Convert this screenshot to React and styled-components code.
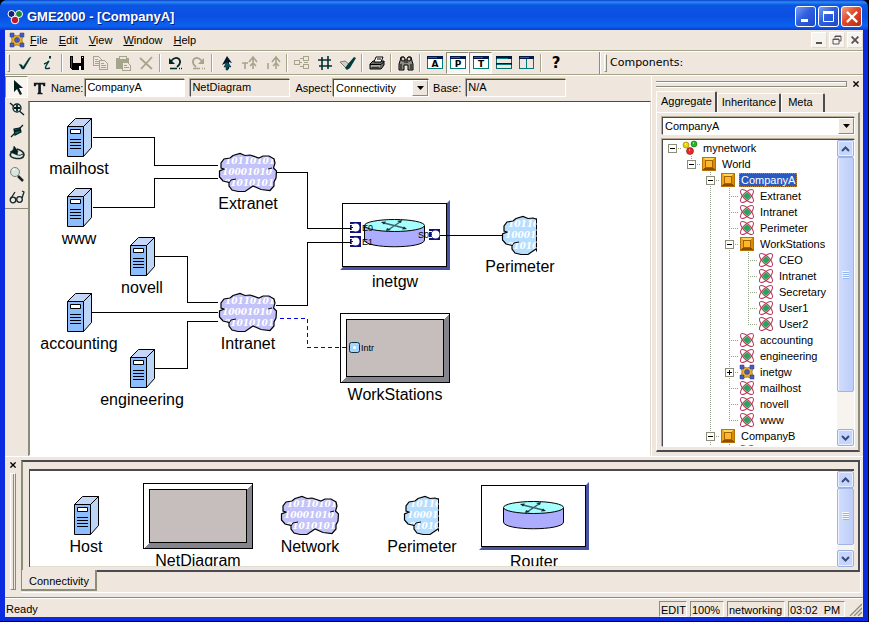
import React, { useId, useState } from "react";
import styled, { createGlobalStyle, css } from "styled-components";

const face = "#efe7de";
const shade = "#8c8c7b";
const dark = "#4a4a52";
const frameBlue = "#0a2be0";

const GlobalStyle = createGlobalStyle`
  *, *::before, *::after { box-sizing: border-box; }
  body { margin: 0; background: #000; }
  body, button, input, select {
    font-family: "Liberation Sans", Arial, sans-serif;
    font-size: 11px;
    line-height: 14px;
    color: #000;
  }
  button { border: 0; padding: 0; background: none; }
`;

const Shell = styled.div`
  display: flex;
  flex-direction: column;
  height: 100vh;
  border: solid #000;
  border-width: 0 1px 1px 0;
  background: ${frameBlue};
  border-radius: 7px 7px 0 0;
`;

const TitleBar = styled.header`
  display: flex;
  align-items: center;
  gap: 4px;
  height: 30px;
  padding: 3px 6px 0 7px;
  border-radius: 7px 7px 0 0;
  background: linear-gradient(#0a3ccc, #2a8cf0 2px, #0c56e4 5px, #0a4ee2 16px, #0c62f0 26px, #0a3cd4);
`;

const Title = styled.h1`
  flex: 1;
  margin: 0;
  color: #fff;
  font-size: 13px;
  line-height: 16px;
  font-weight: bold;
  text-shadow: 1px 1px 0 #082080;
`;

const CaptionButtons = styled.div`
  display: flex;
  gap: 2px;
`;

const CaptionButton = styled.button`
  display: grid;
  place-items: center;
  width: 21px;
  height: 21px;
  border: 1px solid #fff;
  border-radius: 3px;
  background: ${(p) =>
    p.$close
      ? "linear-gradient(135deg, #f0a088, #e0492a 45%, #b82a10)"
      : "linear-gradient(135deg, #7a9cf0, #2f5fe0 45%, #1a48c8)"};
`;

const Body = styled.div`
  flex: 1;
  min-height: 0;
  display: flex;
  flex-direction: column;
  margin: 0 5px 4px;
  background: ${face};
`;

const Etched = css`
  border-bottom: 1px solid #fff;
  box-shadow: inset 0 -1px 0 #a5a58c;
`;

const MenuBar = styled.nav`
  ${Etched}
  display: flex;
  align-items: center;
  height: 22px;
  padding: 0 0 2px 4px;
`;

const MenuButton = styled.button`
  padding: 0 6px 0 5px;
  height: 18px;
  &::first-letter { text-decoration: underline; }
`;

const MenuIcon = styled.span`
  display: flex;
  width: 16px;
`;

const MdiButtons = styled.div`
  display: flex;
  gap: 2px;
  margin-left: auto;
`;

const MdiButton = styled.button`
  display: grid;
  place-items: center;
  width: 16px;
  height: 16px;
  background: #f7f3ef;
  border: 1px solid;
  border-color: #fff #e0d8cc #e0d8cc #fff;
`;

const ToolBar = styled.div`
  ${Etched}
  display: flex;
  align-items: center;
  height: 24px;
  padding: 0 0 2px 2px;
`;

const Grip = styled.span`
  width: 3px;
  height: 18px;
  margin-right: 3px;
  border: 1px solid;
  border-color: #fff ${shade} ${shade} #fff;
`;

const ToolButton = styled.button`
  display: grid;
  place-items: center;
  width: 23px;
  height: 22px;
  flex: none;
  ${(p) =>
    p["aria-pressed"] &&
    css`
      background: #f9f5f1;
      border: 1px solid;
      border-color: ${shade} #fff #fff ${shade};
    `}
`;

const Separator = styled.span`
  flex: none;
  width: 2px;
  height: 18px;
  margin: 0 2px;
  border-left: 1px solid #a5a58c;
  border-right: 1px solid #fff;
`;

const BandEdge = styled.span`
  width: 2px;
  height: 22px;
  margin: 0 3px 0 32px;
  border-left: 1px solid ${shade};
  border-right: 1px solid #fff;
`;

const BandLabel = styled.span`
  font-family: "DejaVu Sans", sans-serif;
  white-space: nowrap;
`;

const Main = styled.div`
  flex: 1;
  min-height: 0;
  display: flex;
`;

const ToolPalette = styled.aside`
  display: flex;
  flex-direction: column;
  width: 23px;
  height: 133px;
  flex: none;
  border-bottom: 1px solid ${shade};
`;

const Center = styled.main`
  flex: 1;
  min-width: 0;
  display: flex;
  flex-direction: column;
`;

const PropertyBar = styled.div`
  display: flex;
  align-items: center;
  height: 25px;
  padding: 0 0 2px 5px;
`;

const FieldLabel = styled.label`
  margin: 0 1px 0 4px;
  white-space: nowrap;
`;

const sunken = css`
  border: 1px solid;
  border-color: ${dark} #fff #fff ${dark};
  box-shadow: -1px -1px 0 #b5ad94;
`;

const TextField = styled.input`
  ${sunken}
  width: 100px;
  height: 18px;
  padding: 0 1px 1px;
  margin: 0 1px;
  border-radius: 0;
  outline: none;
  background: ${(p) => (p.readOnly ? face : "#fff")};
`;

const PropertyGap = styled.span`
  width: 3px;
`;

const ComboFrame = styled.div`
  ${sunken}
  display: flex;
  width: ${(p) => (p.$wide ? "auto" : "96px")};
  height: 18px;
  background: #fff;
`;

const ComboSelect = styled.select`
  flex: 1;
  min-width: 0;
  appearance: none;
  border: 0;
  border-radius: 0;
  outline: none;
  padding: 0 2px;
  background: #fff;
`;

const ComboArrow = styled.span`
  display: grid;
  place-items: center;
  width: 16px;
  background: ${face};
  border: 1px solid;
  border-color: #fff ${shade} ${shade} #fff;
  pointer-events: none;
`;

const Canvas = styled.section`
  position: relative;
  flex: 1;
  min-height: 0;
  overflow: hidden;
  background: #fff;
  border: 1px solid;
  border-width: 1px 1px 1px 2px;
  border-color: ${dark} #e0dcd0 #fff ${shade};
`;

const Wires = styled.svg`
  position: absolute;
  left: 0;
  top: 0;
`;

const NodeBox = styled.figure`
  display: flex;
  flex-direction: column;
  align-items: center;
  width: 112px;
  margin: 0;
  flex: none;
  svg { display: block; overflow: visible; }
`;

const PlacedNode = styled(NodeBox)`
  position: absolute;
  left: ${(p) => p.$x - 56}px;
  top: ${(p) => p.$y}px;
`;

const Caption = styled.figcaption`
  margin-top: 3px;
  font-size: 16px;
  line-height: 18px;
  white-space: nowrap;
`;

const Browser = styled.aside`
  display: flex;
  flex-direction: column;
  flex: none;
  width: 212px;
  padding: 2px 3px 4px 4px;
  border-left: 1px solid #fff;
`;

const GripRow = styled.div`
  display: flex;
  align-items: center;
  height: 12px;
  gap: 4px;
`;

const GripLines = styled.span`
  flex: 1;
  height: 6px;
  border: solid ${shade};
  border-width: 1px 1px 1px 0;
  box-shadow: inset 0 1px 0 #fff, 0 1px 0 #fff;
`;

const CloseButton = styled.button`
  display: grid;
  place-items: center;
  width: 9px;
  height: 9px;
`;

const Tabs = styled.div`
  display: flex;
  align-items: flex-end;
  height: 22px;
`;

const Tab = styled.button`
  height: ${(p) => (p["aria-selected"] ? 21 : 19)}px;
  padding: 0 ${(p) => (p.$roomy ? 10 : 3)}px 3px ${(p) => (p.$roomy ? 6 : 4)}px;
  border: solid;
  border-width: 1px 2px 0 1px;
  border-color: #fff ${dark} #fff #fff;
  border-radius: 2px 2px 0 0;
`;

const TabPage = styled.div`
  flex: 1;
  min-height: 0;
  display: flex;
  flex-direction: column;
  gap: 4px;
  padding: 4px 3px 3px 5px;
  border: solid;
  border-width: 1px 2px 2px 1px;
  border-color: #fff ${shade} ${dark} #fff;
`;

const TreeFrame = styled.div`
  ${sunken}
  flex: 1;
  min-height: 0;
  display: flex;
  background: #fff;
`;

const Tree = styled.ul`
  flex: 1;
  margin: 0;
  padding: 0;
  list-style: none;
  overflow: hidden;
`;

const TreeRow = styled.li`
  display: flex;
  align-items: center;
  height: 16px;
`;

const dotsDown = "repeating-linear-gradient(#94a58c 0 1px, transparent 1px 2px)";
const dotsAcross = "repeating-linear-gradient(90deg, #94a58c 0 1px, transparent 1px 2px)";

const guideBackground = {
  none: "none",
  root: `${dotsAcross} 9px 8px / 10px 1px no-repeat`,
  pass: `${dotsDown} 9px 0 / 1px 16px no-repeat`,
  tee: `${dotsDown} 9px 0 / 1px 16px no-repeat, ${dotsAcross} 9px 8px / 10px 1px no-repeat`,
  end: `${dotsDown} 9px 0 / 1px 8px no-repeat, ${dotsAcross} 9px 8px / 10px 1px no-repeat`,
};

const Guide = styled.span`
  display: grid;
  place-items: center;
  width: 19px;
  height: 16px;
  flex: none;
  background: ${(p) => guideBackground[p.$kind]};
`;

const Expander = styled.button`
  display: grid;
  place-items: center;
  width: 9px;
  height: 9px;
  background: #fff;
  border: 1px solid ${shade};
`;

const TreeIcon = styled.span`
  display: flex;
  width: 16px;
  margin-right: 3px;
  flex: none;
`;

const TreeLabel = styled.span`
  padding: 0 2px;
  line-height: 14px;
  white-space: nowrap;
  ${(p) =>
    p.$selected &&
    css`
      color: #fff;
      background: #2a5ac0;
      outline: 1px dotted #c08030;
      outline-offset: -1px;
    `}
`;

const ScrollTrack = styled.div`
  display: flex;
  flex-direction: column;
  flex: none;
  width: 17px;
  background: #f7f3ef;
`;

const ScrollButton = styled.button`
  display: grid;
  place-items: center;
  height: 17px;
  border: 1px solid #9cb0e0;
  border-radius: 2px;
  background: #c6d5fb;
  box-shadow: inset 0 0 0 1px #e8effe;
`;

const ScrollThumb = styled.div`
  flex: ${(p) => p.$part} 0 0;
  display: grid;
  place-items: center;
  border: 1px solid #a0b4e8;
  border-radius: 2px;
  background: linear-gradient(90deg, #d0defc, #bccdf8);
  box-shadow: inset 1px 0 0 #eef3ff;
`;

const ScrollRest = styled.div`
  flex: ${(p) => p.$part} 0 0;
`;

const PartDock = styled.section`
  display: flex;
  padding: 3px 2px 4px 4px;
  border-top: 1px solid #fff;
  height: 141px;
  flex: none;
`;

const DockHandle = styled.div`
  display: flex;
  flex-direction: column;
  align-items: center;
  gap: 4px;
  width: 12px;
  padding-right: 5px;
  flex: none;
`;

const DockLines = styled.span`
  flex: 1;
  width: 6px;
  margin-bottom: 3px;
  border: 1px solid;
  border-color: #fff ${shade} ${shade} #fff;
  box-shadow: inset 2px 0 0 ${face}, inset 3px 0 0 ${shade};
`;

const DockPanel = styled.div`
  flex: 1;
  min-width: 0;
  display: flex;
  flex-direction: column;
  border-right: 1px solid #fff;
  border-bottom: 1px solid #fff;
`;

const DockPage = styled.div`
  padding: 7px 4px 3px 6px;
  border: solid;
  border-width: 2px;
  border-color: ${dark} ${dark} ${dark} ${shade};
`;

const PartFrame = styled.div`
  display: flex;
  height: 98px;
  border-top: 2px solid ${dark};
  border-left: 1px solid ${dark};
`;

const PartList = styled.div`
  flex: 1;
  min-width: 0;
  overflow: hidden;
  background: #fff;
  border-bottom: 1px solid #e0dcd0;
`;

const PartRow = styled.div`
  display: flex;
  align-items: center;
  height: 110px;
`;

const BottomTab = styled.button`
  align-self: flex-start;
  height: 21px;
  margin-top: -2px;
  padding: 2px 6px 0 7px;
  background: ${face};
  border: solid;
  border-width: 0 2px 2px 1px;
  border-color: ${shade};
`;

const StatusBar = styled.footer`
  display: flex;
  align-items: center;
  gap: 3px;
  height: 20px;
  flex: none;
  padding: 2px 1px 0;
  border-top: 1px solid ${shade};
  box-shadow: inset 0 1px 0 #fff;
`;

const StatusText = styled.span`
  flex: 1;
`;

const StatusCell = styled.span`
  height: 16px;
  padding: 1px 0 0 1px;
  min-width: ${(p) => p.$min || 0}px;
  border: 1px solid;
  border-color: ${shade} #fff #fff ${shade};
  white-space: pre;
`;

/* ---------- small icons ---------- */

const glyphs = {
  check: <path d="M2 9l3 1 1 2L12 3l2-1L7 14H5z" fill="#002020" stroke="#106060" strokeWidth=".5" />,
  info: (
    <g fill="none" stroke="#003838" strokeWidth="1.4">
      <path d="M4 9q3-1 5-3L6 11q-2 4 4 2" />
      <path d="M10 1v2.500" strokeWidth="2" />
    </g>
  ),
  save: (
    <g shapeRendering="crispEdges">
      <path d="M1 1h14v14H3l-2-2z" fill="#000" />
      <path d="M4 1h8v7H4z" fill="#efe7de" />
      <path d="M5 10h7v5H5z" fill="#000" />
      <path d="M10 11h2v4h-2zM13 2h1v1h-1z" fill="#fff" />
      <path d="M2 2h1v11H2z" fill="#006868" />
    </g>
  ),
  copy: (
    <g fill="#efe7de" stroke="#a5a58c" shapeRendering="crispEdges">
      <path d="M1.500 1.500h5l3 3v6h-8zM3 4.500h3M3 6.500h5M3 8.500h5" />
      <path d="M7.500 5.500h5l3 3v6h-8zM9 8.500h3M9 10.500h5M9 12.500h5" />
    </g>
  ),
  paste: (
    <g shapeRendering="crispEdges">
      <path d="M1 3h13v11H1z" fill="#a5a58c" />
      <path d="M4 1h7v3H4z" fill="#efe7de" stroke="#a5a58c" />
      <path d="M7.500 7.500h5l3 3v5h-8zM9 10.500h3M9 12.500h5" fill="#efe7de" stroke="#a5a58c" />
    </g>
  ),
  cut: <path d="M2 3l12 11M14 2L3 14" stroke="#a5a58c" strokeWidth="1.8" />,
  undo: (
    <g fill="none" stroke="#002828" strokeWidth="1.800">
      <path d="M4 6q4-5 8-2 3 4-2 8" />
      <path d="M2 3v6h6z" fill="#002828" stroke="none" />
      <path d="M3 13.500h7M12 13.500h1M14 13.500h1" strokeWidth="1.400" />
    </g>
  ),
  redo: (
    <g fill="none" stroke="#a5a58c" strokeWidth="1.800">
      <path d="M12 6q-4-5-8-2-3 4 2 8" />
      <path d="M14 3v6H8z" fill="#a5a58c" stroke="none" />
      <path d="M3 13.500h7M12 13.500h1M14 13.500h1" strokeWidth="1.400" />
    </g>
  ),
  up: (
    <g>
      <path d="M8 1l5 7-3-1v7H8V8L5 9l-2 1z" fill="#001828" />
      <path d="M8 6l4 6H9v3H7v-3H5z" fill="#005868" stroke="#001018" strokeWidth=".5" />
    </g>
  ),
  upType: (
    <g fill="none" stroke="#a5a58c" strokeWidth="1.600">
      <path d="M0 8h6M3 8v6M11 14V3M7 7l4-5 4 5M8 11l3-3 3 3" />
    </g>
  ),
  upInst: (
    <g fill="none" stroke="#a5a58c" strokeWidth="1.600">
      <path d="M3 8v6M11 14V3M7 7l4-5 4 5M8 11l3-3 3 3" />
    </g>
  ),
  hierarchy: (
    <g fill="#efe7de" stroke="#a5a58c" shapeRendering="crispEdges">
      <path d="M.5 5.500h5v4h-5zM9.500 1.500h5v4h-5zM9.500 9.500h5v4h-5zM6 3.500h3M6 7.500h2M6 11.500h3M10 7.500h4" />
    </g>
  ),
  hash: <path d="M5 2v13M11 1v13M1 5h13M2 11h13" stroke="#003030" strokeWidth="1.600" />,
  brush: (
    <g>
      <path d="M0 7l5-1 4 3-2 5z" fill="#d6cec4" stroke="#5a6b63" strokeWidth=".8" />
      <path d="M5 13l3-4 6-7 2 1-6 10-3 2z" fill="#003c3c" />
    </g>
  ),
  print: (
    <g stroke="#000" strokeWidth="1">
      <path d="M1 9l3-3h11v4l-3 4H1z" fill="#6b6b63" />
      <path d="M5 7l2-5h7l-2 5z" fill="#fff" />
      <path d="M1 9.500h11l3-3M3 12h7M8 4h4" fill="none" />
      <path d="M2 11h9" stroke="#e8e4dc" />
    </g>
  ),
  find: (
    <g fill="#8c8c84" stroke="#000">
      <path d="M2 6l1-4h3l1 3h2l1-3h3l1 4 1 3v6h-5v-5H6v5H1V9z" />
      <circle cx="5" cy="4" r="2" fill="#d8d0c8" />
      <circle cx="11" cy="4" r="2" fill="#d8d0c8" />
      <path d="M3 9v5M13 9v5M6 7h4" />
    </g>
  ),
  splitRows: (
    <g shapeRendering="crispEdges">
      <path d="M.5 2.500h15v11H.5z" fill={face} stroke="#006b6b" />
      <path d="M0 1h16v3H0zM0 8h16v2H0z" fill="#00183c" />
      <path d="M1 3h11v1H1zM1 9h14v1H1z" fill="#087878" />
    </g>
  ),
  splitCols: (
    <g shapeRendering="crispEdges">
      <path d="M.5 2.500h14v11H.5zM7.500 4v10" fill={face} stroke="#007878" />
      <path d="M0 1h15v3H0z" fill="#00184c" />
      <path d="M1 2h9v1H1z" fill="#087878" />
    </g>
  ),
  pointer: <path d="M5 1v12l3-3 3 6 2-1-3-6h4z" fill="#001c1c" />,
  addLink: (
    <g stroke="#002020" strokeWidth="1.300">
      <path d="M1 2l14 12" />
      <circle cx="8" cy="7" r="4" fill="#e4e8e0" />
      <path d="M8 4v6M5 7h6" strokeWidth="1.800" />
    </g>
  ),
  removeLink: (
    <g stroke="#002020" strokeWidth="1.200">
      <path d="M2 14L14 2" />
      <path d="M5 6l6-1 1 4-6 3z" fill="#186868" />
      <path d="M5 8l7-1" strokeWidth="2" />
    </g>
  ),
  anchor: (
    <g fill="none" stroke="#103030" strokeWidth="1.600">
      <path d="M4 6q-6 5 1 7 9 2 10-3 0-4-7-6" />
      <path d="M6 8q3 4 8 1" strokeWidth="1" />
      <path d="M5 1l4 5-1 4-7-3 3-2z" fill="#002020" strokeWidth=".5" />
    </g>
  ),
  magnify: (
    <g>
      <path d="M9 9l5 5" stroke="#202020" strokeWidth="2.500" />
      <circle cx="6" cy="5" r="4.500" fill="#d8e4dc" stroke="#73847b" />
      <path d="M4 3l2-1" stroke="#fff" strokeWidth="1.500" />
    </g>
  ),
  glasses: (
    <g fill="none" stroke="#102828" strokeWidth="1.300">
      <circle cx="4" cy="11" r="2.800" />
      <circle cx="10.500" cy="10.500" r="2.800" />
      <path d="M1.500 10L6 3M13 9l2-6-2-1" />
    </g>
  ),
  typeT: <path d="M1 2h13v4h-2l-1-2H9v9l2 1v1H5v-1l1-1V4H4L3 6H1z" fill="#101820" />,
  folder: (
    <g shapeRendering="crispEdges">
      <path d="M1 1h14v14H1z" fill="#d88c08" />
      <path d="M1 1l3 3h7l4-3z" fill="#ffd65a" />
      <path d="M1 1l3 3v7l-3 4z" fill="#efa520" />
      <path d="M1 15l3-4h7l4 4z" fill="#8c4a00" />
      <path d="M4 4h7v7H4z" fill="#ffb829" stroke="#a56300" />
      <path d="M1.500 1.500h13v13h-13z" fill="none" stroke="#b57308" />
    </g>
  ),
  atom: (
    <g fill="none" stroke="#b5395a" strokeWidth="1">
      <ellipse cx="8" cy="8" rx="8.500" ry="3.600" transform="rotate(45 8 8)" />
      <ellipse cx="8" cy="8" rx="8.500" ry="3.600" transform="rotate(-45 8 8)" />
      <path d="M8 4.500l3.500 3.500L8 11.500 4.500 8z" fill="#29a55a" stroke="#2a8a50" />
    </g>
  ),
  model: (
    <g>
      <path d="M2 2l6 2 6-2-1 6 1 6-6-1-6 1 1-6z" fill="#f0b020" stroke="#8c6300" strokeWidth=".7" />
      <g fill="#4a5ac0" stroke="#303c88" strokeWidth=".5">
        <path d="M1 1h4v4H1zM11 1h4v4h-4zM1 11h4v4H1zM11 11h4v4h-4z" />
        <circle cx="8" cy="8" r="2.500" />
      </g>
    </g>
  ),
  project: (
    <g strokeWidth=".6">
      <circle cx="4" cy="5" r="3" fill="#e7d610" stroke="#847b00" />
      <circle cx="12" cy="4" r="3" fill="#29b529" stroke="#106b10" />
      <circle cx="8" cy="11" r="3.500" fill="#e72929" stroke="#8c1010" />
      <path d="M3 4h1M11 3h1M7 10h1" stroke="#fff" strokeWidth="1.200" />
    </g>
  ),
  logo: (
    <g stroke="#fff" strokeWidth="1">
      <circle cx="4.500" cy="5" r="3.500" fill="#182078" />
      <circle cx="12" cy="5" r="3.500" fill="#188838" />
      <circle cx="8" cy="11" r="3.800" fill="#c01828" />
    </g>
  ),
};

const Icon = ({ name, size = 16 }) => (
  <svg width={size} height={size} viewBox="0 0 16 16" aria-hidden="true">
    {glyphs[name]}
  </svg>
);

const WindowIcon = ({ letter }) => (
  <svg width="16" height="16" viewBox="0 0 16 16" aria-hidden="true">
    <path d="M.5 2.500h15v11H.5z" fill="#fff" stroke="#007878" shapeRendering="crispEdges" />
    <path d="M0 1h16v3H0z" fill="#00184c" shapeRendering="crispEdges" />
    <path d="M1 2h9v1H1z" fill="#087878" shapeRendering="crispEdges" />
    <text x="8" y="12" textAnchor="middle" fontSize="9" fontWeight="bold" fontFamily="DejaVu Sans, sans-serif">
      {letter}
    </text>
  </svg>
);

const QuestionIcon = () => (
  <svg width="16" height="20" viewBox="0 0 16 20" aria-hidden="true">
    <text x="8" y="15" textAnchor="middle" fontSize="15" fontWeight="bold" fontFamily="DejaVu Sans, sans-serif">
      ?
    </text>
  </svg>
);

const Cross = ({ size = 7, color = "#000", weight = 1.6 }) => (
  <svg width={size} height={size} viewBox="0 0 7 7" aria-hidden="true">
    <path d="M.5.5l6 6M6.500.5l-6 6" stroke={color} strokeWidth={weight} />
  </svg>
);

const Triangle = () => (
  <svg width="7" height="4" viewBox="0 0 7 4" aria-hidden="true">
    <path d="M0 0h7L3.500 4z" />
  </svg>
);

const Chevron = ({ down }) => (
  <svg width="9" height="6" viewBox="0 0 9 6" aria-hidden="true">
    <path d={down ? "M1 1l3.500 3.500L8 1" : "M1 5l3.500-3.500L8 5"} fill="none" stroke="#39497b" strokeWidth="2" />
  </svg>
);

const ThumbRidges = () => (
  <svg width="7" height="8" viewBox="0 0 7 8" aria-hidden="true" shapeRendering="crispEdges">
    <path d="M0 .5h7M0 2.500h7M0 4.500h7M0 6.500h7" stroke="#f4f9ff" />
    <path d="M1 1.500h6M1 3.500h6M1 5.500h6M1 7.500h6" stroke="#94b5f0" />
  </svg>
);

/* ---------- diagram drawings ---------- */

const HostArt = () => (
  <svg width="25" height="39" viewBox="0 0 25 39" aria-hidden="true">
    <g stroke="#000" strokeLinejoin="round">
      <path d="M.5 8.500l8-8h16l-8 8z" fill="#c6d6f8" />
      <path d="M16.500 8.500l8-8v29l-8 9z" fill="#bdd6f8" />
      <path d="M.5 8.500h16v30H.5z" fill="#8cbdff" />
      <path d="M3.500 11.500h10v4h-10z" fill="#fff" />
      <path d="M3 21.500h11M3 24.500h11M3 27.500h11M3 30.500h11" />
    </g>
  </svg>
);

const cloudPath =
  "M2 15V10L5 6 11 5 14 2.500 21 .5 26 2.500 31 2 40 5 44 3 50 3 55 6 56 10 54.500 15 57.500 18 57 25 55 29 55 33 51 37.500 42 36.500 34 33 26 38.500H19L13 37 10 33V29.500L4 28 .5 24V18L5 16z";

const CloudArt = ({ cropped }) => {
  const id = useId();
  return (
    <svg width={cropped ? 36 : 58} height="39" viewBox={cropped ? "0 0 36 39" : "0 0 58 39"} aria-hidden="true">
      <clipPath id={id + "a"}>
        <path d={cloudPath} />
      </clipPath>
      <clipPath id={id + "b"}>
        <rect x="-1" y="-1" width={cropped ? 36 : 60} height="41" />
      </clipPath>
      <g clipPath={`url(#${id}b)`}>
        <path d={cloudPath} fill={cropped ? "#b5deff" : "#c3c3fa"} />
        <g
          clipPath={`url(#${id}a)`}
          fill="#fff"
          fontFamily="DejaVu Serif, serif"
          fontStyle="italic"
          fontWeight="bold"
          fontSize="9"
        >
          <text x="6" y="11">{cropped ? "10110" : "10110101"}</text>
          <text x="3" y="22">{cropped ? "10001" : "10001010"}</text>
          <text x="5" y="33">{cropped ? "01010" : "01010101"}</text>
        </g>
        <path d={cloudPath} fill="none" stroke="#000" strokeWidth="1.200" />
        <path d="M10 30l2-3 5-1M49 16l4-1" fill="none" stroke="#000" />
      </g>
      {cropped && <path d="M34.500 2.500v33" stroke="#000" strokeDasharray="5 1" />}
    </svg>
  );
};

const Cylinder = ({ x, y }) => (
  <g transform={`translate(${x} ${y})`}>
    <path d="M.5 7v14c0 9 60 9 60 0V7" fill="#adadff" stroke="#000" />
    <ellipse cx="30.500" cy="6.500" rx="30" ry="6" fill="#a5ffff" stroke="#000" />
    <path d="M20 4l20 5M24 11L36 3" stroke="#39636b" strokeWidth="1.500" />
    <path d="M17 3l5-.5-2 3zM43 10l-5 .5 2-3zM38 1l-5 1 4 2zM22 12l5-1-4-2z" fill="#182828" />
  </g>
);

const Port = ({ x, y, flip }) => (
  <g transform={`translate(${x} ${y})`}>
    <path d="M0 0h11v11H0z" fill="#10107b" shapeRendering="crispEdges" />
    <circle cx={flip ? 6.500 : 5.500} cy="5.500" r="4" fill="#fff" />
    <path d="M0 2.500h3M0 5.500h3M0 8.500h3" stroke="#fff" />
    <path d="M0 5.500h3" stroke="#10107b" />
  </g>
);

const RouterArt = ({ ports, height = 70 }) => (
  <svg width="110" height={height} viewBox={`0 0 110 ${height}`} aria-hidden="true">
    <path d={`M107 3l3-3v${height}H0l3-3z`} fill="#4a52a5" />
    <path
      d={`M2.500 3.500h104v${height - 7}h-104z`}
      fill="#fff"
      stroke="#000"
      shapeRendering="crispEdges"
    />
    <Cylinder x={24} y={19} />
    {ports && (
      <g fontFamily="Liberation Sans, Arial, sans-serif" fontSize="9">
        <Port x={10} y={22} />
        <Port x={10} y={36} />
        <Port x={89} y={29} flip />
        <text x="22" y="31">E0</text>
        <text x="22" y="45">E1</text>
        <text x="78" y="38">S0</text>
      </g>
    )}
  </svg>
);

const FrameArt = ({ port, height = 70 }) => (
  <svg width="110" height={height} viewBox={`0 0 110 ${height}`} aria-hidden="true">
    <g shapeRendering="crispEdges">
      <path d={`M.5.5h109v${height - 1}H.5z`} fill="#fff" stroke="#000" />
      <path d={`M103 7l6-6v${height - 2}H1l6-6z`} fill="#84848c" />
      <path d={`M6.500 6.500h97v${height - 13}h-97z`} fill="#c6bdbd" stroke="#000" />
    </g>
    {port && (
      <g fontFamily="Liberation Sans, Arial, sans-serif" fontSize="9">
        <rect x="9.500" y="29.500" width="10" height="10" rx="2" fill="#a5d6ff" stroke="#10313f" />
        <circle cx="14.500" cy="34.500" r="1.500" fill="#fff" />
        <text x="21" y="38">Intr</text>
      </g>
    )}
  </svg>
);

const wires = [
  "M62.500 35.500H124.500V63.500H188",
  "M62.500 105.500H124.500V76.500H188",
  "M125 154.500H157.500V200.500H188",
  "M62 210.500H188",
  "M125 266.500H157.500V219.500H188",
  "M246 70.500H277.500V126.500H320",
  "M246 203.500H277.500V140.500H320",
  "M410 133.500H473",
];

const diagramNodes = [
  { label: "mailhost", x: 49, y: 16, art: <HostArt /> },
  { label: "www", x: 49, y: 86, art: <HostArt /> },
  { label: "novell", x: 112, y: 135, art: <HostArt /> },
  { label: "accounting", x: 49, y: 191, art: <HostArt /> },
  { label: "engineering", x: 112, y: 247, art: <HostArt /> },
  { label: "Extranet", x: 218, y: 51, art: <CloudArt /> },
  { label: "Intranet", x: 218, y: 191, art: <CloudArt /> },
  { label: "inetgw", x: 365, y: 98, art: <RouterArt ports /> },
  { label: "Perimeter", x: 490, y: 114, art: <CloudArt cropped /> },
  { label: "WorkStations", x: 365, y: 211, art: <FrameArt port /> },
];

const parts = [
  { label: "Host", art: <HostArt /> },
  { label: "NetDiagram", art: <FrameArt height={66} /> },
  { label: "Network", art: <CloudArt /> },
  { label: "Perimeter", art: <CloudArt cropped /> },
  { label: "Router", art: <RouterArt height={68} /> },
];

const leaf = (label, guides) => ({ label, guides, icon: "atom" });
const top = ["none", "none", "pass"];
const treeRows = [
  { label: "mynetwork", guides: ["root"], icon: "project", open: true },
  { label: "World", guides: ["none", "end"], icon: "folder", open: true },
  { label: "CompanyA", guides: ["none", "none", "tee"], icon: "folder", open: true, selected: true },
  leaf("Extranet", [...top, "tee"]),
  leaf("Intranet", [...top, "tee"]),
  leaf("Perimeter", [...top, "tee"]),
  { label: "WorkStations", guides: [...top, "tee"], icon: "folder", open: true },
  leaf("CEO", [...top, "pass", "tee"]),
  leaf("Intranet", [...top, "pass", "tee"]),
  leaf("Secretary", [...top, "pass", "tee"]),
  leaf("User1", [...top, "pass", "tee"]),
  leaf("User2", [...top, "pass", "end"]),
  leaf("accounting", [...top, "tee"]),
  leaf("engineering", [...top, "tee"]),
  { label: "inetgw", guides: [...top, "tee"], icon: "model", open: false },
  leaf("mailhost", [...top, "tee"]),
  leaf("novell", [...top, "tee"]),
  leaf("www", [...top, "end"]),
  { label: "CompanyB", guides: ["none", "none", "tee"], icon: "folder", open: true },
  leaf("", [...top, "tee"]),
];

const toolGroups = [
  [["check", "Apply"], ["info", "Info"]],
  [["save", "Save"], ["copy", "Copy"], ["paste", "Paste"], ["cut", "Delete"]],
  [["undo", "Undo"], ["redo", "Redo"]],
  [["up", "Go to parent"], ["upType", "Go to type"], ["upInst", "Go to instance"]],
  [["hierarchy", "Hierarchy"], ["hash", "Grid"], ["brush", "Refresh"]],
  [["print", "Print"]],
  [["find", "Find"]],
];

const modeTools = [
  ["pointer", "Edit mode"],
  ["addLink", "Add connection"],
  ["removeLink", "Remove connection"],
  ["anchor", "Set mode"],
  ["magnify", "Zoom"],
  ["glasses", "Visualize"],
];

const ExpanderMark = ({ open }) => (
  <svg width="5" height="5" viewBox="0 0 5 5" aria-hidden="true" shapeRendering="crispEdges">
    <path d={open ? "M0 2.500h5" : "M0 2.500h5M2.500 0v5"} stroke="#000" />
  </svg>
);

const ScrollBar = ({ thumb, rest }) => (
  <ScrollTrack>
    <ScrollButton aria-label="Scroll up"><Chevron /></ScrollButton>
    <ScrollThumb $part={thumb}><ThumbRidges /></ScrollThumb>
    <ScrollRest $part={rest} />
    <ScrollButton aria-label="Scroll down"><Chevron down /></ScrollButton>
  </ScrollTrack>
);

const Combo = ({ wide, ...props }) => (
  <ComboFrame $wide={wide}>
    <ComboSelect {...props} />
    <ComboArrow><Triangle /></ComboArrow>
  </ComboFrame>
);

export default function App() {
  const [name, setName] = useState("CompanyA");
  const [mode, setMode] = useState("pointer");
  const [tab, setTab] = useState("Aggregate");

  return (
    <>
      <GlobalStyle />
      <Shell>
        <TitleBar>
          <Icon name="logo" />
          <Title>GME2000 - [CompanyA]</Title>
          <CaptionButtons>
            <CaptionButton aria-label="Minimize">
              <svg width="13" height="13" viewBox="0 0 13 13"><path d="M2 9h7v3H2z" fill="#fff" /></svg>
            </CaptionButton>
            <CaptionButton aria-label="Maximize">
              <svg width="13" height="13" viewBox="0 0 13 13">
                <path d="M1.500 2.500h10v9h-10z" fill="none" stroke="#fff" />
                <path d="M1 1h11v3H1z" fill="#fff" />
              </svg>
            </CaptionButton>
            <CaptionButton $close aria-label="Close"><Cross size={12} color="#fff" weight={1.3} /></CaptionButton>
          </CaptionButtons>
        </TitleBar>

        <Body>
          <MenuBar>
            <MenuIcon><Icon name="model" /></MenuIcon>
            {["File", "Edit", "View", "Window", "Help"].map((m) => (
              <MenuButton key={m}>{m}</MenuButton>
            ))}
            <MdiButtons>
              <MdiButton aria-label="Minimize document">
                <svg width="10" height="10" viewBox="0 0 10 10"><path d="M2 7h6v2H2z" fill="#5a5252" /></svg>
              </MdiButton>
              <MdiButton aria-label="Restore document">
                <svg width="10" height="10" viewBox="0 0 10 10">
                  <path d="M3 3V1h6v5H7M3 1.500h6M1 4h6v5H1zM1 4.500h6" fill="none" stroke="#5a5252" />
                </svg>
              </MdiButton>
              <MdiButton aria-label="Close document"><Cross size={8} color="#5a5252" /></MdiButton>
            </MdiButtons>
          </MenuBar>

          <ToolBar>
            <Grip />
            {toolGroups.map((group, i) => (
              <React.Fragment key={i}>
                {group.map(([icon, label]) => (
                  <ToolButton key={icon} aria-label={label}><Icon name={icon} /></ToolButton>
                ))}
                <Separator />
              </React.Fragment>
            ))}
            <ToolButton aria-label="Attribute panel"><WindowIcon letter="A" /></ToolButton>
            <ToolButton aria-label="Part browser" aria-pressed><WindowIcon letter="P" /></ToolButton>
            <ToolButton aria-label="Tree browser" aria-pressed><WindowIcon letter="T" /></ToolButton>
            <ToolButton aria-label="Split rows"><Icon name="splitRows" /></ToolButton>
            <ToolButton aria-label="Split columns"><Icon name="splitCols" /></ToolButton>
            <Separator />
            <ToolButton aria-label="Help"><QuestionIcon /></ToolButton>
            <BandEdge />
            <Grip />
            <BandLabel>Components:</BandLabel>
          </ToolBar>

          <Main>
            <ToolPalette>
              {modeTools.map(([icon, label]) => (
                <ToolButton
                  key={icon}
                  aria-label={label}
                  aria-pressed={mode === icon || undefined}
                  onClick={() => setMode(icon)}
                >
                  <Icon name={icon} />
                </ToolButton>
              ))}
            </ToolPalette>

            <Center>
              <PropertyBar>
                <Icon name="typeT" size={14} />
                <FieldLabel htmlFor="name">Name:</FieldLabel>
                <TextField id="name" value={name} onChange={(e) => setName(e.target.value)} />
                <PropertyGap />
                <TextField aria-label="Kind" readOnly value="NetDiagram" />
                <FieldLabel htmlFor="aspect">Aspect:</FieldLabel>
                <Combo id="aspect" defaultValue="Connectivity">
                  <option>Connectivity</option>
                </Combo>
                <FieldLabel htmlFor="base">Base:</FieldLabel>
                <PropertyGap />
                <TextField id="base" readOnly value="N/A" />
              </PropertyBar>
              <Canvas aria-label="Network diagram">
                <Wires width="620" height="352" aria-hidden="true" shapeRendering="crispEdges">
                  {wires.map((d) => (
                    <path key={d} d={d} fill="none" stroke="#000" />
                  ))}
                </Wires>
                {diagramNodes.map((n) => (
                  <PlacedNode key={n.label} $x={n.x} $y={n.y}>
                    {n.art}
                    <Caption>{n.label}</Caption>
                  </PlacedNode>
                ))}
                <Wires width="620" height="352" aria-hidden="true" shapeRendering="crispEdges">
                  <path d="M250 216.500H277.500V245.500H320" fill="none" stroke="#0000e0" strokeDasharray="4 3" />
                  <path d="M310 126.500H321M310 140.500H321M410 133.500H420" stroke="#000" />
                </Wires>
              </Canvas>
            </Center>

            <Browser>
              <GripRow>
                <GripLines />
                <CloseButton aria-label="Close browser"><Cross size={6} /></CloseButton>
              </GripRow>
              <Tabs role="tablist">
                {["Aggregate", "Inheritance", "Meta"].map((t) => (
                  <Tab key={t} role="tab" aria-selected={tab === t} $roomy={t === "Meta"} onClick={() => setTab(t)}>
                    {t}
                  </Tab>
                ))}
              </Tabs>
              <TabPage>
                <Combo wide aria-label="Selected object" defaultValue="CompanyA">
                  <option>CompanyA</option>
                </Combo>
                <TreeFrame>
                  <Tree role="tree">
                    {treeRows.map((row, i) => (
                      <TreeRow key={i} role="treeitem">
                        {row.guides.map((kind, k) => (
                          <Guide key={k} $kind={kind}>
                            {row.open !== undefined && k === row.guides.length - 1 && (
                              <Expander aria-label={`Toggle ${row.label}`}><ExpanderMark open={row.open} /></Expander>
                            )}
                          </Guide>
                        ))}
                        <TreeIcon><Icon name={row.icon} /></TreeIcon>
                        <TreeLabel $selected={row.selected}>{row.label}</TreeLabel>
                      </TreeRow>
                    ))}
                  </Tree>
                  <ScrollBar thumb={235} rest={37} />
                </TreeFrame>
              </TabPage>
            </Browser>
          </Main>

          <PartDock>
            <DockHandle>
              <CloseButton aria-label="Close part browser"><Cross size={6} /></CloseButton>
              <DockLines />
            </DockHandle>
            <DockPanel>
              <DockPage>
                <PartFrame>
                  <PartList>
                    <PartRow>
                      {parts.map((p) => (
                        <NodeBox key={p.label}>
                          {p.art}
                          <Caption>{p.label}</Caption>
                        </NodeBox>
                      ))}
                    </PartRow>
                  </PartList>
                  <ScrollBar thumb={60} rest={6} />
                </PartFrame>
              </DockPage>
              <BottomTab>Connectivity</BottomTab>
            </DockPanel>
          </PartDock>

          <StatusBar>
            <StatusText>Ready</StatusText>
            <StatusCell>EDIT</StatusCell>
            <StatusCell $min={34}>100%</StatusCell>
            <StatusCell $min={58}>networking</StatusCell>
            <StatusCell $min={57}>{"03:02  PM"}</StatusCell>
            <svg width="14" height="14" viewBox="0 0 14 14" aria-hidden="true">
              <path d="M2 14L14 2M6 14l8-8M10 14l4-4" stroke={shade} strokeWidth="1.300" />
            </svg>
          </StatusBar>
        </Body>
      </Shell>
    </>
  );
}
